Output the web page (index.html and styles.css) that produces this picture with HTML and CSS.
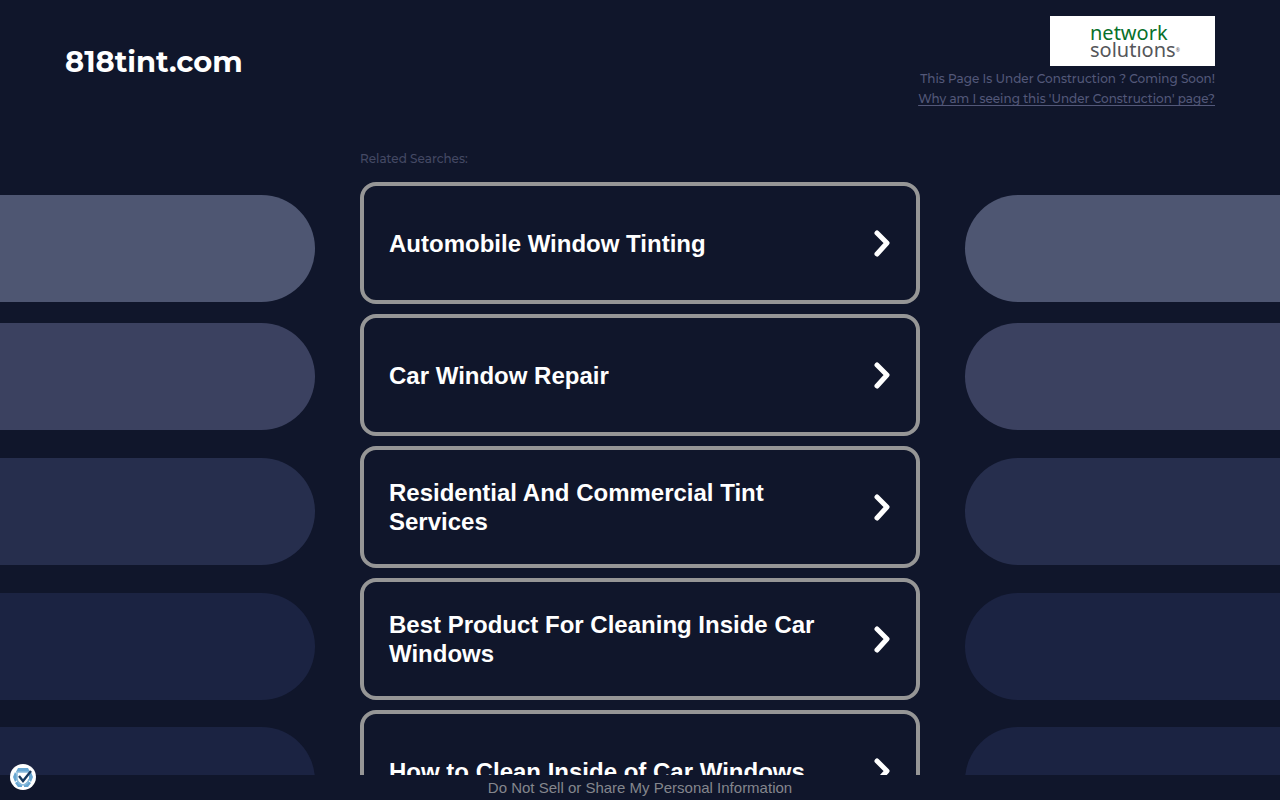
FILE: index.html
```html
<!DOCTYPE html>
<html lang="en">
<head>
<meta charset="utf-8">
<meta name="viewport" content="width=device-width, initial-scale=1">
<title>818tint.com</title>
<link rel="stylesheet" href="styles.css">
</head>
<body class="page">
<div class="content">
  <header class="header">
    <h1 class="domain">818tint.com</h1>
    <div class="notice">
      <div class="brand" role="img" aria-label="network solutions">
        <span class="brand-top">network</span>
        <span class="brand-bottom">solutıons<span class="brand-mark">®</span></span>
      </div>
      <span>This Page Is Under Construction ? Coming Soon!</span>
      <a class="notice-link" href="#">Why am I seeing this 'Under Construction' page?</a>
    </div>
  </header>
  <main class="main">
    <div class="pills pills-left" aria-hidden="true">
      <div class="pill pill-1"></div><div class="pill pill-2"></div><div class="pill pill-3"></div><div class="pill pill-4"></div><div class="pill pill-5"></div>
    </div>
    <section class="searches">
      <h2 class="label">Related Searches:</h2>
      <nav class="list">
        <a class="card" href="#"><span>Automobile Window Tinting</span><svg class="arrow" viewBox="0 0 18 28"><path d="M4 4L14 14L4 25"/></svg></a>
        <a class="card" href="#"><span>Car Window Repair</span><svg class="arrow" viewBox="0 0 18 28"><path d="M4 4L14 14L4 25"/></svg></a>
        <a class="card" href="#"><span>Residential And Commercial Tint Services</span><svg class="arrow" viewBox="0 0 18 28"><path d="M4 4L14 14L4 25"/></svg></a>
        <a class="card" href="#"><span>Best Product For Cleaning Inside Car Windows</span><svg class="arrow" viewBox="0 0 18 28"><path d="M4 4L14 14L4 25"/></svg></a>
        <a class="card" href="#"><span>How to Clean Inside of Car Windows</span><svg class="arrow" viewBox="0 0 18 28"><path d="M4 4L14 14L4 25"/></svg></a>
      </nav>
    </section>
    <div class="pills pills-right" aria-hidden="true">
      <div class="pill pill-1"></div><div class="pill pill-2"></div><div class="pill pill-3"></div><div class="pill pill-4"></div><div class="pill pill-5"></div>
    </div>
  </main>
</div>
<footer class="footer"><a class="footer-link" href="#">Do Not Sell or Share My Personal Information</a></footer>
<button class="consent" type="button" aria-label="Privacy settings">
  <svg class="consent-icon" viewBox="0 0 26 26">
    <circle cx="13" cy="13" r="13" fill="#fff"/>
    <path d="M8 4h10l2 4H6zM5 8l2 3v5l-2 2-2-5zM21 8l2 5-2 5-2-2v-5zM5 19l3-2 4 4v2H8zM21 19l-3-2-4 4v2h4z" fill="#67a6d2"/>
    <path d="M7 8h12M7 8v7q1 5 6 6 5-1 6-6" fill="none" stroke="#8abbdc" stroke-width="1.5"/>
    <path d="M9 12l4 5 8-10" fill="none" stroke="#173a60" stroke-width="2.4"/>
  </svg>
</button>
</body>
</html>
```
FILE: styles.css
```css
* { box-sizing: border-box; }
.page {
  margin: 0;
  height: 100vh;
  display: flex;
  flex-direction: column;
  background: #10162b;
  color: #fff;
  font-family: Montserrat, Inter, sans-serif;
}
.content { flex: 1; min-height: 0; overflow: hidden; }
.header {
  display: flex;
  justify-content: space-between;
  align-items: flex-start;
  padding: 16px 65px 0;
}
.domain { margin: 26px 0 0; font-size: 29px; line-height: 40px; font-weight: 700; }
.notice {
  display: flex;
  flex-direction: column;
  align-items: flex-end;
  color: #535879;
  font-size: 12px;
  line-height: 20px;
  font-weight: 500;
}
.notice-link { color: inherit; text-underline-offset: 2px; }
.brand {
  display: flex;
  flex-direction: column;
  width: 165px;
  padding: 8px 0 8px 40px;
  margin-bottom: 3px;
  background: #fff;
  font-family: "Noto Sans", sans-serif;
  font-size: 20px;
  line-height: 17px;
  font-weight: 400;
}
.brand-top { color: #08702a; }
.brand-bottom { color: #55565a; }
.brand-mark { font-size: 5px; vertical-align: 5px; line-height: 1; }
.main {
  display: grid;
  grid-template-columns: 1fr minmax(0, 560px) 1fr;
  column-gap: 45px;
  padding-top: 40px;
}
.pills { display: flex; flex-direction: column; gap: 28px; padding-top: 46px; }
.pill { height: 107px; flex: none; }
.pills-left .pill { border-radius: 0 54px 54px 0; }
.pills-right .pill { border-radius: 54px 0 0 54px; }
.pill-1 { background: #4e5672; margin-bottom: -7px; }
.pill-2 { background: #3b4160; }
.pill-3 { background: #262e4d; }
.pill-4 { background: #1b2342; margin-bottom: -1px; }
.pill-5 { background: #1b2342; }
.label { margin: 0 0 13px; color: #444964; font-size: 12px; line-height: 20px; font-weight: 500; }
.list { display: flex; flex-direction: column; gap: 10px; font-family: "Liberation Sans", Arial, sans-serif; }
.card {
  display: flex;
  justify-content: space-between;
  align-items: center;
  gap: 40px;
  min-height: 122px;
  padding: 0 25px;
  border: 4px solid #969696;
  border-radius: 16px;
  color: #fff;
  font-size: 24px;
  line-height: 29px;
  font-weight: 700;
  text-decoration: none;
}
.arrow { width: 18px; height: 28px; flex: none; fill: none; stroke: #fff; stroke-width: 5; stroke-linecap: round; stroke-linejoin: round; }
.footer { text-align: center; font-family: "Liberation Sans", Arial, sans-serif; font-size: 15px; line-height: 25px; }
.footer-link { color: #84868d; text-decoration: none; }
.consent { position: absolute; left: 10px; bottom: 10px; padding: 0; border: 0; background: none; line-height: 0; }
.consent-icon { width: 26px; height: 26px; }
```
